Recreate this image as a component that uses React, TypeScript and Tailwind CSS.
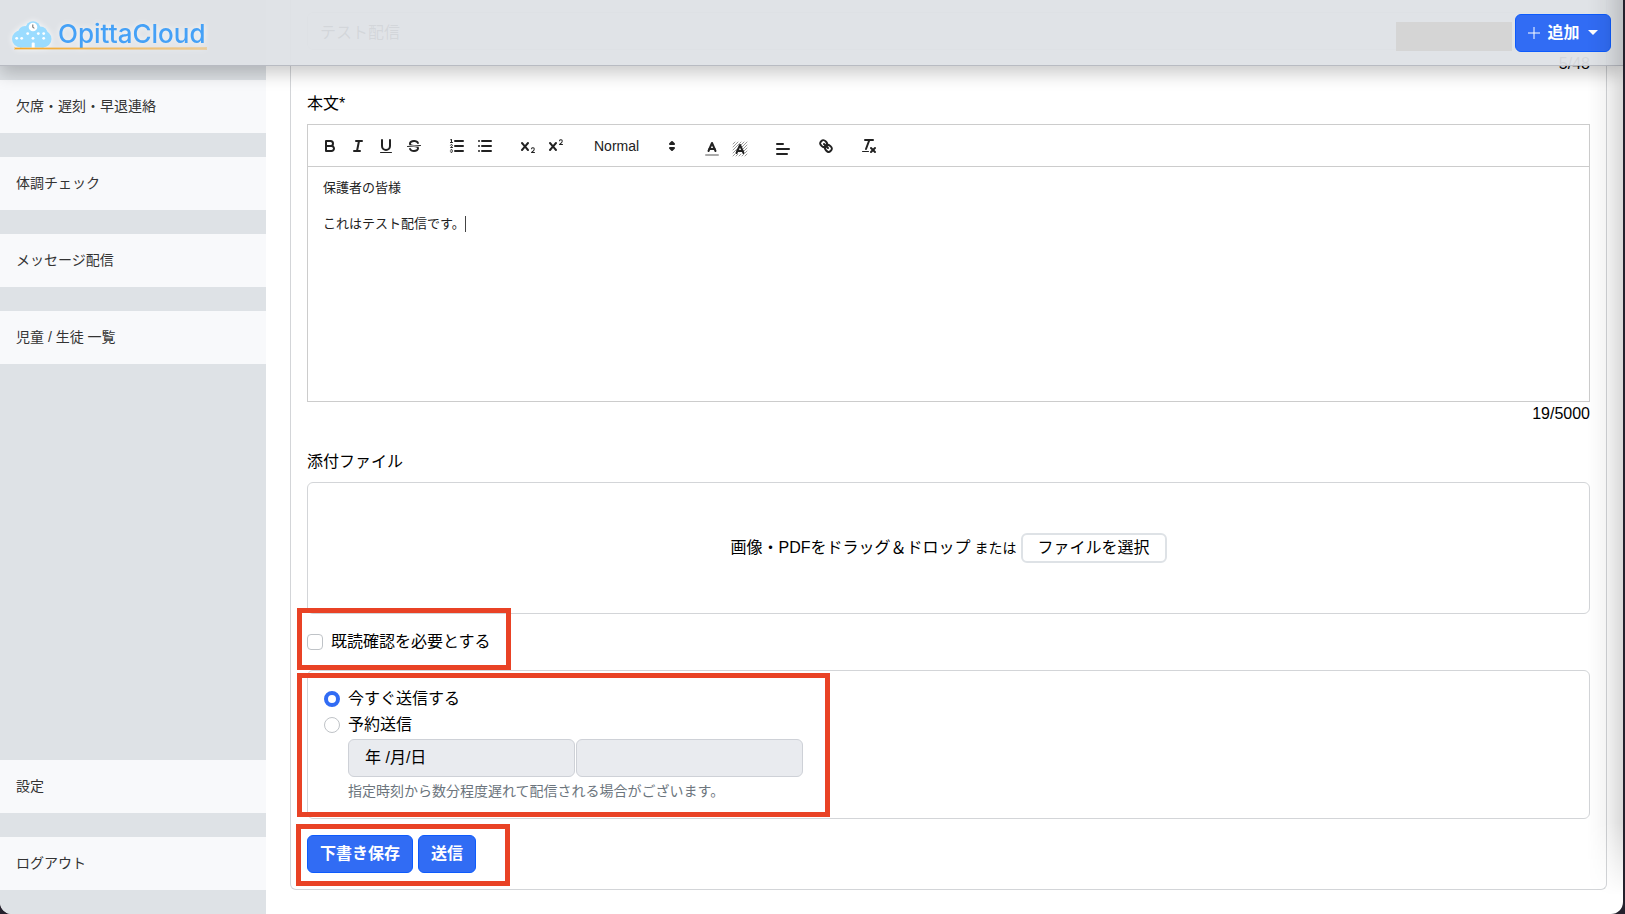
import React from "react";

const svg = "h-[18px] w-[18px] fill-none stroke-[#222] stroke-2 [stroke-linecap:round] [stroke-linejoin:round]";
const thin = "stroke-1";
const solid = "fill-[#222] stroke-none";

const icons: Record<string, React.ReactNode> = {
  太字: (
    <>
      <path d="M5,4H9.5A2.5,2.5,0,0,1,12,6.5v0A2.5,2.5,0,0,1,9.5,9H5A0,0,0,0,1,5,9V4A0,0,0,0,1,5,4Z" />
      <path d="M5,9h5.5A2.5,2.5,0,0,1,13,11.5v0A2.5,2.5,0,0,1,10.5,14H5a0,0,0,0,1,0,0V9A0,0,0,0,1,5,9Z" />
    </>
  ),
  斜体: (
    <>
      <line x1="7" x2="13" y1="4" y2="4" />
      <line x1="5" x2="11" y1="14" y2="14" />
      <line x1="8" x2="10" y1="14" y2="4" />
    </>
  ),
  下線: (
    <>
      <path d="M5,3V9a4.012,4.012,0,0,0,4,4H9a4.012,4.012,0,0,0,4-4V3" />
      <rect className={solid} height="1" rx="0.5" ry="0.5" width="12" x="3" y="15" />
    </>
  ),
  取り消し線: (
    <>
      <line className={thin} x1="15.5" x2="2.5" y1="8.5" y2="9.5" />
      <path className={solid} d="M9.007,8C6.542,7.791,6,7.519,6,6.5,6,5.792,7.283,5,9,5c1.571,0,2.765.679,2.969,1.309a1,1,0,0,0,1.9-.617C13.356,4.106,11.354,3,9,3,6.2,3,4,4.538,4,6.5a3.2,3.2,0,0,0,.5,1.843Z" />
      <path className={solid} d="M8.984,10C11.457,10.208,12,10.479,12,11.5c0,0.708-1.283,1.5-3,1.5-1.571,0-2.765-.679-2.969-1.309a1,1,0,1,0-1.9.617C4.644,13.894,6.646,15,9,15c2.8,0,5-1.538,5-3.5a3.2,3.2,0,0,0-.5-1.843Z" />
    </>
  ),
  番号付きリスト: (
    <>
      <line x1="7" x2="15" y1="4" y2="4" />
      <line x1="7" x2="15" y1="9" y2="9" />
      <line x1="7" x2="15" y1="14" y2="14" />
      <line className={thin} x1="2.5" x2="4.5" y1="5.5" y2="5.5" />
      <path className={solid} d="M3.5,6A0.5,0.5,0,0,1,3,5.5V3.085l-0.276.138A0.5,0.5,0,0,1,2.053,3c-0.124-.247-0.023-0.324.224-0.447l1-.5A0.5,0.5,0,0,1,4,2.5v3A0.5,0.5,0,0,1,3.5,6Z" />
      <path className={thin} d="M4.5,10.5h-2c0-.234,1.85-1.076,1.85-2.234A0.959,0.959,0,0,0,2.5,8.156" />
      <path className={thin} d="M2.5,14.846a0.959,0.959,0,0,0,1.85-.109A0.7,0.7,0,0,0,3.75,14a0.688,0.688,0,0,0,.6-0.736,0.959,0.959,0,0,0-1.85-.109" />
    </>
  ),
  箇条書き: (
    <>
      <line x1="6" x2="15" y1="4" y2="4" />
      <line x1="6" x2="15" y1="9" y2="9" />
      <line x1="6" x2="15" y1="14" y2="14" />
      <line x1="3" x2="3" y1="4" y2="4" />
      <line x1="3" x2="3" y1="9" y2="9" />
      <line x1="3" x2="3" y1="14" y2="14" />
    </>
  ),
  下付き: (
    <>
      <path className={solid} d="M15.5,15H13.861a3.858,3.858,0,0,0,1.914-2.975,1.8,1.8,0,0,0-1.6-1.751A1.921,1.921,0,0,0,12.021,11.7a0.50013,0.50013,0,1,0,.957.291h0a0.914,0.914,0,0,1,1.053-.725,0.81,0.81,0,0,1,.744.762c0,1.076-1.16971,1.86982-1.93971,2.43082A1.45639,1.45639,0,0,0,12,15.5a0.5,0.5,0,0,0,.5.5h3A0.5,0.5,0,0,0,15.5,15Z" />
      <path className={solid} d="M9.65,5.241a1,1,0,0,0-1.409.108L6,7.964,3.759,5.349A1,1,0,0,0,2.192,6.59178Q2.21541,6.6213,2.241,6.649L4.684,9.5,2.241,12.35A1,1,0,0,0,3.71,13.70722q0.02557-.02768.049-0.05722L6,11.036,8.241,13.65a1,1,0,1,0,1.567-1.24277Q9.78459,12.3777,9.759,12.35L7.316,9.5,9.759,6.651A1,1,0,0,0,9.65,5.241Z" />
    </>
  ),
  上付き: (
    <>
      <path className={solid} d="M15.5,7H13.861a4.015,4.015,0,0,0,1.914-2.975,1.8,1.8,0,0,0-1.6-1.751A1.922,1.922,0,0,0,12.021,3.7a0.5,0.5,0,1,0,.957.291,0.917,0.917,0,0,1,1.053-.725,0.81,0.81,0,0,1,.744.762c0,1.077-1.164,1.925-1.934,2.486A1.423,1.423,0,0,0,12,7.5a0.5,0.5,0,0,0,.5.5h3A0.5,0.5,0,0,0,15.5,7Z" />
      <path className={solid} d="M9.651,5.241a1,1,0,0,0-1.41.108L6,7.964,3.759,5.349a1,1,0,1,0-1.519,1.3L4.683,9.5,2.241,12.35a1,1,0,1,0,1.519,1.3L6,11.036,8.241,13.65a1,1,0,0,0,1.519-1.3L7.317,9.5,9.759,6.651A1,1,0,0,0,9.651,5.241Z" />
    </>
  ),
  文字色: (
    <>
      <line className="stroke-[#aaa]" x1="3" x2="15" y1="15" y2="15" />
      <polyline points="5.5 11 9 3 12.5 11" />
      <line x1="11.63" x2="6.38" y1="9" y2="9" />
    </>
  ),
  背景色: (
    <>
      <path
        className="stroke-[#999] stroke-1"
        d="M2 4 4 2M2 7 7 2M2 10 10 2M2 13 13 2M2 16 16 2M5 16 16 5M8 16 16 8M11 16 16 11M14 16 16 14"
      />
      <polygon className="fill-white stroke-none" points="9,3 4,14 14,14" opacity="0.8" />
      <polyline points="5.5 13 9 5 12.5 13" />
      <line x1="11.63" x2="6.38" y1="11" y2="11" />
    </>
  ),
  配置: (
    <>
      <line x1="3" x2="15" y1="9" y2="9" />
      <line x1="3" x2="13" y1="14" y2="14" />
      <line x1="3" x2="9" y1="4" y2="4" />
    </>
  ),
  リンク: (
    <>
      <line x1="7" x2="11" y1="7" y2="11" />
      <path d="M8.9,4.577a3.476,3.476,0,0,1,.36,4.679A3.476,3.476,0,0,1,4.577,8.9C3.185,7.5,2.035,6.4,4.217,4.217S7.5,3.185,8.9,4.577Z" />
      <path d="M13.423,9.1a3.476,3.476,0,0,0-4.679-.36,3.476,3.476,0,0,0,.36,4.679c1.392,1.392,2.5,2.542,4.679.36S14.815,10.5,13.423,9.1Z" />
    </>
  ),
  書式をクリア: (
    <>
      <line x1="5" x2="13" y1="3" y2="3" />
      <line x1="6" x2="9.35" y1="12" y2="3" />
      <line x1="11" x2="15" y1="11" y2="15" />
      <line x1="15" x2="11" y1="11" y2="15" />
      <rect className={solid} height="1" rx="0.5" ry="0.5" width="7" x="2" y="14" />
    </>
  ),
};

function Tool({ name }: { name: string }) {
  return (
    <button type="button" aria-label={name} className="flex h-6 w-7 items-center justify-center">
      <svg viewBox="0 0 18 18" className={svg}>{icons[name]}</svg>
    </button>
  );
}

function Tools({ names, low = false }: { names: string[]; low?: boolean }) {
  return <div className={low ? "flex pt-[3px]" : "flex"}>{names.map((n) => <Tool key={n} name={n} />)}</div>;
}

function Logo() {
  return (
    <a href="#" className="mt-1 ml-3 flex w-[194px] flex-col drop-shadow-[0_0_3px_rgba(255,255,255,0.9)]">
      <span className="flex items-center gap-[6px]">
        <svg viewBox="0 0 40 27" className="h-[27px] w-10 shrink-0">
          <g fill="#9bdcff">
            <circle cx="8.500" cy="18" r="8.500" />
            <circle cx="13" cy="12" r="7" />
            <circle cx="21" cy="7.500" r="7.300" />
            <circle cx="28.500" cy="12.500" r="7" />
            <circle cx="31" cy="18" r="8.500" />
            <rect x="8" y="12" width="23.500" height="14.500" />
          </g>
          <circle cx="21" cy="6" r="4.300" fill="#fff" />
          <path d="M20.800 3.500v3l1.600.6" fill="none" stroke="#666" />
          <g fill="#fff">
            <circle cx="4.700" cy="17.300" r="1.400" />
            <circle cx="9.700" cy="17.300" r="1.400" />
            <circle cx="15.700" cy="12.600" r="1.400" />
            <circle cx="21" cy="17.300" r="1.400" />
            <circle cx="26.300" cy="12.600" r="1.400" />
            <circle cx="31.700" cy="12.600" r="1.400" />
            <circle cx="31.700" cy="17.300" r="1.400" />
            <rect x="19.700" y="21.500" width="3" height="6" rx="1" />
          </g>
        </svg>
        <span className="font-[Inter] text-[26px] leading-7 font-medium text-[#45a1f7]">OpittaCloud</span>
      </span>
      <span className="ml-[3px] h-px bg-linear-to-r from-[#f5a623] to-[#f5a62366] outline outline-[#f5a62355]" />
    </a>
  );
}

function NavItem({ label }: { label: string }) {
  return (
    <a href="#" className="flex h-[53px] items-center bg-[#f8f9fb] pb-0.5 pl-4 text-sm text-[#333]">
      {label}
    </a>
  );
}

const primary = "rounded-md border border-[#0d5bfd] bg-[#316cf4] text-base font-semibold text-white";
const choice = "appearance-none h-4 w-4 shrink-0 border border-[#bfc3c7] bg-white";

export default function App() {
  return (
    <div className="relative min-h-screen bg-[#25212d] pr-[2px] font-['Liberation_Sans','Noto_Sans_CJK_JP',sans-serif] text-base text-black">
      <div className="relative flex min-h-screen overflow-hidden rounded-b-xl bg-white">
        <header className="absolute inset-x-0 top-0 z-10 flex h-[66px] items-center border-b border-[#b8bbc2] bg-[#dee2e6]/95 pr-3 shadow-[0_8px_16px_rgba(0,0,0,0.2)]">
          <Logo />
          <div className="mt-2 mr-[3px] ml-auto h-[29px] w-[116px] bg-[#d5d5d5]" />
          <button type="button" className={`${primary} flex h-[38px] w-24 items-center justify-center gap-[7px]`}>
            <svg viewBox="0 0 12 12" className="h-3 w-3 stroke-white"><path d="M6 0v12M0 6h12" /></svg>
            追加
            <svg viewBox="0 0 10 5" className="ml-px h-[5px] w-[10px] fill-white"><path d="M0 0h10L5 5Z" /></svg>
          </button>
        </header>

        <nav className="flex w-[266px] shrink-0 flex-col bg-[#dee2e6] pt-20 pb-6">
          <div className="flex flex-1 flex-col gap-6">
            <NavItem label="欠席・遅刻・早退連絡" />
            <NavItem label="体調チェック" />
            <NavItem label="メッセージ配信" />
            <NavItem label="児童 / 生徒 一覧" />
          </div>
          <div className="flex flex-col gap-6">
            <NavItem label="設定" />
            <NavItem label="ログアウト" />
          </div>
        </nav>

        <main className="flex-1 pr-4 pb-6 pl-6">
          <form className="flex h-full flex-col rounded-b-md border border-t-0 border-[#d3d5d8] px-4 pt-3 pb-4">
            <input aria-label="件名" defaultValue="テスト配信" className="h-[38px] rounded-md border border-[#d3d5d8] px-3" />
            <div className="h-6 text-right leading-7">5/48</div>

            <div className="mt-[18px] leading-6" id="body-label">本文*</div>
            <div className="mt-2 border border-[#ccc]">
              <div className="flex h-[42px] items-start gap-[15px] border-b border-[#ccc] px-2 pt-[9px]">
                <Tools names={["太字", "斜体", "下線", "取り消し線"]} />
                <Tools names={["番号付きリスト", "箇条書き"]} />
                <Tools names={["下付き", "上付き"]} />
                <button type="button" className="flex h-6 w-[98px] items-center justify-between pr-[2px] pl-[9px] text-sm font-medium text-[#222]">
                  Normal
                  <svg viewBox="0 0 18 18" className="h-[18px] w-[18px] fill-[#222] stroke-[#222] stroke-2 [stroke-linejoin:round]">
                    <polygon points="7 11 9 13 11 11" />
                    <polygon points="7 7 9 5 11 7" />
                  </svg>
                </button>
                <Tools names={["文字色", "背景色"]} low />
                <Tools names={["配置"]} low />
                <Tools names={["リンク"]} />
                <Tools names={["書式をクリア"]} />
              </div>
              <div role="textbox" aria-labelledby="body-label" className="h-[234px] px-[15px] py-3 text-[13px] leading-[18px] text-[#222]">
                <p>保護者の皆様</p>
                <p><br /></p>
                <p className="flex items-center">これはテスト配信です。<span className="h-4 w-px bg-[#444]" /></p>
              </div>
            </div>
            <div className="text-right leading-6">19/5000</div>

            <div className="mt-6 leading-6">添付ファイル</div>
            <div className="mt-2 flex h-[132px] items-center justify-center gap-1 rounded-md border border-[#d3d5d8]">
              <span>画像・PDFをドラッグ＆ドロップ</span>
              <span className="text-sm">または</span>
              <button type="button" className="h-[30px] w-[146px] rounded-md border-2 border-[#dee2e6]">ファイルを選択</button>
            </div>

            <div className="relative mt-4 flex h-6 items-center gap-2">
              <input id="confirm" type="checkbox" className={`${choice} rounded`} />
              <label htmlFor="confirm">既読確認を必要とする</label>
              <span className="pointer-events-none absolute -top-[22px] -left-[10px] h-[62px] w-[214px] border-5 border-[#e94225]" />
            </div>

            <fieldset className="relative mt-4 flex h-[149px] flex-col rounded-md border border-[#d3d5d8] px-4 pt-[15px]">
              <div className="flex h-[26px] items-center gap-2">
                <input id="now" name="timing" type="radio" defaultChecked className={`${choice} rounded-full checked:border-4 checked:border-[#316cf4]`} />
                <label htmlFor="now">今すぐ送信する</label>
              </div>
              <div className="flex h-[26px] items-center gap-2">
                <input id="later" name="timing" type="radio" className={`${choice} rounded-full`} />
                <label htmlFor="later">予約送信</label>
              </div>
              <div className="mt-px flex gap-px pl-6">
                <input aria-label="日付" disabled defaultValue="年 /月/日" className="h-[38px] w-[227px] rounded-md border border-[#ced1d7] bg-[#e9ebef] px-4 pb-1" />
                <input aria-label="時刻" disabled className="h-[38px] w-[227px] rounded-md border border-[#ced1d7] bg-[#e9ebef] px-4 pb-1" />
              </div>
              <p className="pt-1 pl-6 text-sm leading-5 text-[#6c757d]">指定時刻から数分程度遅れて配信される場合がございます。</p>
              <span className="pointer-events-none absolute top-[2px] -left-[11px] h-[144px] w-[533px] border-5 border-[#e94225]" />
            </fieldset>

            <div className="relative mt-4 flex gap-[5px]">
              <button type="button" className={`${primary} h-[38px] px-3`}>下書き保存</button>
              <button type="submit" className={`${primary} h-[38px] px-3`}>送信</button>
              <span className="pointer-events-none absolute -top-[11px] -left-[11px] h-[62px] w-[214px] border-5 border-[#e94225]" />
            </div>
          </form>
        </main>
        <div className="pointer-events-none absolute inset-y-0 right-0 z-20 w-9 bg-linear-to-r from-transparent via-black/4 to-black/15 [mask-image:linear-gradient(#000_90%,transparent_98%)]" />
      </div>
    </div>
  );
}
